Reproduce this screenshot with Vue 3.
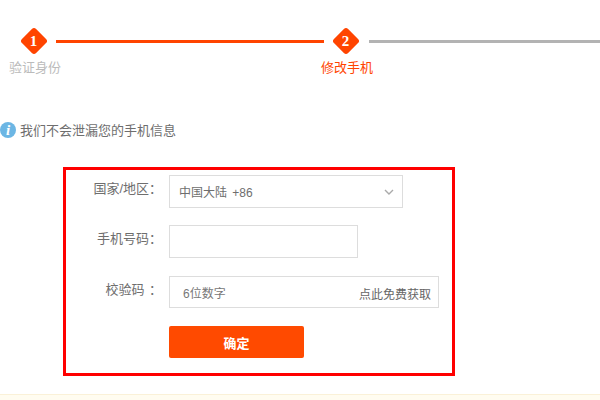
<template>
  <div class="page">
    <div class="steps">
      <div class="step">
        <div class="diamond"><span>1</span></div>
        <p class="step-label">验证身份</p>
      </div>
      <div class="line line-first"></div>
      <div class="step active">
        <div class="diamond"><span>2</span></div>
        <p class="step-label">修改手机</p>
      </div>
      <div class="line line-rest"></div>
    </div>

    <div class="notice">
      <span class="info-icon">i</span>
      <span class="notice-text">我们不会泄漏您的手机信息</span>
    </div>

    <form class="phone-form" @submit.prevent>
      <div class="row row-country">
        <label>国家/地区：</label>
        <div class="field select">
          <span>中国大陆 +86</span>
          <svg width="10" height="6" viewBox="0 0 10 6">
            <path d="M1 1 L5 5 L9 1" fill="none" stroke="#aaa" stroke-width="1.4" />
          </svg>
        </div>
      </div>
      <div class="row row-phone">
        <label>手机号码：</label>
        <div class="field phone"></div>
      </div>
      <div class="row row-code">
        <label class="code-label">校验码 ：</label>
        <div class="field code">
          <span class="placeholder">6位数字</span>
          <span class="get-code">点此免费获取</span>
        </div>
      </div>
      <button class="submit" type="submit">确定</button>
    </form>

    <div class="tips"></div>
  </div>
</template>

<script setup>
</script>

<style>
html,
body {
  background: #fff;
  overflow: hidden;
}
</style>

<style scoped>
.page {
  width: 600px;
  height: 400px;
  overflow: hidden;
  font-family: "Liberation Sans", "Noto Sans CJK SC", sans-serif;
  font-size: 13px;
  color: #6e6e6e;
}

.steps {
  display: flex;
  padding: 28px 0 0 21px;
  height: 49px;
}

.step {
  width: 26px;
  flex-shrink: 0;
}

.diamond {
  width: 20px;
  height: 20px;
  margin: 3px;
  background: #ff4400;
  border-radius: 3px;
  transform: rotate(45deg);
  display: flex;
  align-items: center;
  justify-content: center;
}

.diamond span {
  transform: rotate(-45deg);
  color: #fff;
  font-family: "Liberation Serif", serif;
  font-weight: bold;
  font-size: 15px;
  line-height: 1;
}

.step-label {
  margin: 8px -12px 0;
  font-size: 13px;
  line-height: 18px;
  text-align: center;
  white-space: nowrap;
  color: #bbb;
}

.active .step-label {
  color: #ff4400;
}

.line {
  height: 3px;
  margin-top: 12px;
}

.line-first {
  width: 268px;
  margin-left: 9px;
  margin-right: 9px;
  background: #ff4400;
}

.line-rest {
  flex: 1;
  margin-left: 10px;
  background: #b3b3b3;
}

.notice {
  display: flex;
  align-items: center;
  gap: 4px;
  margin-top: 44px;
  height: 18px;
  line-height: 18px;
}

.notice-text {
  margin-top: 1px;
}

.info-icon {
  width: 16px;
  height: 16px;
  border-radius: 50%;
  background: #6cb6e4;
  color: #fff;
  font-family: "Liberation Serif", serif;
  font-style: italic;
  font-weight: bold;
  font-size: 15px;
  line-height: 16px;
  text-align: center;
}

.phone-form {
  box-sizing: border-box;
  width: 392px;
  height: 209px;
  margin: 28px 0 0 63px;
  padding: 5px 0 0 103px;
  border: 3px solid #f00;
}

.row {
  display: flex;
  position: relative;
}

.row label {
  position: absolute;
  right: 100%;
  margin-right: 7px;
  white-space: nowrap;
  line-height: 18px;
  top: 5px;
}

.row .code-label {
  word-spacing: 1px;
}

.field {
  box-sizing: border-box;
  border: 1px solid #ddd;
  height: 33px;
  display: flex;
  align-items: center;
  justify-content: space-between;
  background: #fff;
}

.select {
  width: 234px;
  padding: 0 8px 0 9px;
  font-size: 12px;
  word-spacing: 2px;
}

.phone {
  width: 189px;
}

.code {
  width: 270px;
  height: 32px;
  padding: 0 7px 0 13px;
  font-size: 12px;
  color: #777;
}

.get-code {
  color: #666;
  margin-top: 3px;
}

.row-phone {
  margin-top: 17px;
}

.row-code {
  margin-top: 18px;
}

.submit {
  display: block;
  width: 135px;
  height: 32px;
  margin-top: 18px;
  border: 0;
  border-radius: 2px;
  background: #ff4a00;
  color: #fff;
  font-family: inherit;
  font-size: 13px;
  font-weight: bold;
}

.tips {
  margin-top: 18px;
  height: 20px;
  border-top: 1px solid #faf1d8;
  background: #fffcf0;
}
</style>
